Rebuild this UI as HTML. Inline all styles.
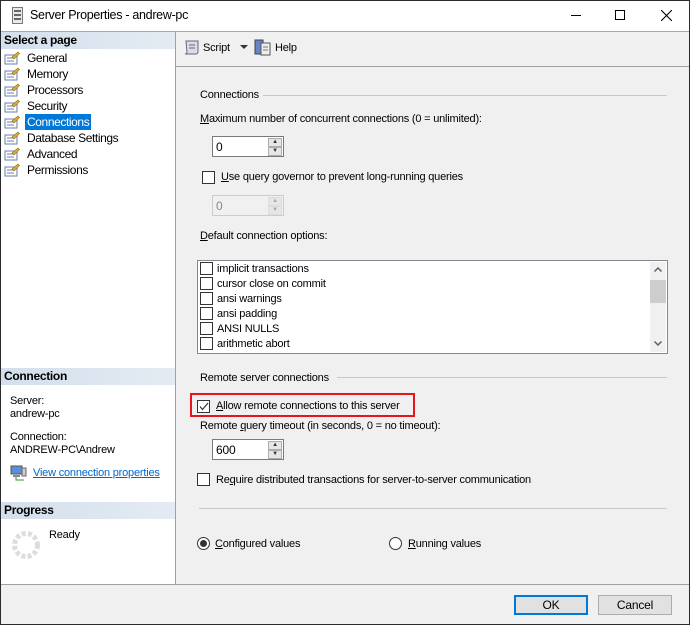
<!DOCTYPE html>
<html><head><meta charset="utf-8"><style>
*{margin:0;padding:0;box-sizing:border-box}
body{width:690px;height:625px;overflow:hidden;font:11px "Liberation Sans",sans-serif;letter-spacing:-0.2px;color:#000;background:#f0f0f0;position:relative}
.a{position:absolute;white-space:nowrap}
.t{line-height:14px}
u{text-decoration:underline}
.cb{position:absolute;width:13px;height:13px;border:1px solid #333;background:#fff}
.spin{position:absolute;width:72px;height:21px;border:1px solid #7a7a7a;background:#fff}
.spin span{position:absolute;left:3px;top:3px;font-size:12px}
.spin i{position:absolute;right:1px;width:14px;height:9px;background:#e6e6e6;border:1px solid #adadad;font-style:normal;font-size:6px;line-height:7px;text-align:center;color:#333}
.hdr{position:absolute;left:1px;width:174px;height:17px;background:linear-gradient(90deg,#d3dfec,#e4ebf3);font-weight:bold;padding:1px 0 0 3px;font-size:12px;letter-spacing:-0.3px}
.nav{position:absolute;left:4px;height:16px;width:170px;white-space:nowrap}
.nav b{position:absolute;left:0;top:1px;width:16px;height:14px}
.nav span{position:absolute;left:21px;top:0;padding:0 2px;line-height:16px;font-size:12px;letter-spacing:-0.4px}
.line{position:absolute;height:1px;background:#a0a0a0}
.btn{position:absolute;height:20px;background:#e1e1e1;border:1px solid #adadad;text-align:center;line-height:18px;font-size:12px}
</style></head><body>
<div class="a" style="left:0;top:0;width:690px;height:625px;border:1px solid #2b2b2b;z-index:10;pointer-events:none"></div>
<!-- title -->
<div class="a" style="left:0;top:0;width:690px;height:31px;background:#fff"></div>
<svg class="a" style="left:12px;top:7px" width="11" height="17"><rect x="0.5" y="0.5" width="10" height="16" fill="#e8e8e8" stroke="#777"/><rect x="2" y="3" width="7" height="2" fill="#666"/><rect x="2" y="7" width="7" height="2" fill="#666"/><rect x="2" y="11" width="7" height="2" fill="#666"/></svg>
<div class="a" style="left:30px;top:8px;font-size:12.5px;letter-spacing:-0.3px">Server Properties - andrew-pc</div>
<div class="a" style="left:571px;top:15px;width:10px;height:1px;background:#000"></div>
<div class="a" style="left:615px;top:10px;width:10px;height:10px;border:1px solid #000"></div>
<svg class="a" style="left:661px;top:10px" width="11" height="11"><path d="M0 0L11 11M11 0L0 11" stroke="#000" stroke-width="1.1"/></svg>
<div class="line" style="left:0;top:31px;width:690px;background:#aaa"></div>
<!-- left panel -->
<div class="a" style="left:1px;top:32px;width:174px;height:552px;background:#fff"></div>
<div class="a" style="left:175px;top:32px;width:1px;height:552px;background:#a0a0a0"></div>
<div class="hdr" style="top:32px">Select a page</div>
<div id="nav"></div>
<div class="hdr" style="top:368px">Connection</div>
<div class="a t" style="left:10px;top:394px">Server:</div>
<div class="a t" style="left:10px;top:407px">andrew-pc</div>
<div class="a t" style="left:10px;top:430px">Connection:</div>
<div class="a t" style="left:10px;top:443px">ANDREW-PC\Andrew</div>
<svg class="a" style="left:10px;top:465px" width="17" height="16"><rect x="1" y="1" width="11" height="8" fill="#5b8fd6" stroke="#555"/><rect x="3" y="10" width="7" height="2" fill="#888"/><rect x="12" y="3" width="4" height="8" fill="#ccc" stroke="#666"/><path d="M6 12v3h8" stroke="#2a9a2a" fill="none"/></svg>
<div class="a t" style="left:33px;top:466px;color:#0066cc;text-decoration:underline">View connection properties</div>
<div class="hdr" style="top:502px">Progress</div>
<svg class="a" style="left:10px;top:529px" width="32" height="32"><circle cx="16" cy="16" r="11.5" fill="none" stroke="#ddd" stroke-width="5" stroke-dasharray="4 2.2"/></svg>
<div class="a t" style="left:49px;top:528px">Ready</div>
<!-- toolbar -->
<svg class="a" style="left:183px;top:39px" width="18" height="17"><path d="M3 2h12v11a2 2 0 0 1-2 2H2a2 2 0 0 0 2-2z" fill="#d8dde6" stroke="#667"/><path d="M6 6h6M6 9h6" stroke="#667"/></svg>
<div class="a t" style="left:203px;top:41px">Script</div>
<svg class="a" style="left:240px;top:45px" width="8" height="5"><path d="M0 0h8L4 4z" fill="#333"/></svg>
<svg class="a" style="left:254px;top:39px" width="17" height="17"><rect x="1" y="1" width="8" height="14" fill="#6b84c4" stroke="#345"/><rect x="7" y="4" width="9" height="12" fill="#eee" stroke="#555"/><path d="M9 8h5M9 11h5" stroke="#777"/></svg>
<div class="a t" style="left:275px;top:41px">Help</div>
<div class="line" style="left:176px;top:66px;width:513px"></div>
<!-- content -->
<div class="a t" style="left:200px;top:88px">Connections</div>
<div class="line" style="left:263px;top:95px;width:404px;background:#c8c8c8"></div>
<div class="a t" style="left:200px;top:112px"><u>M</u>aximum number of concurrent connections (0 = unlimited):</div>
<div class="spin" style="left:212px;top:136px"><span>0</span><i style="top:1px">▲</i><i style="top:10px">▼</i></div>
<div class="cb" style="left:202px;top:171px"></div>
<div class="a t" style="left:221px;top:170px"><u>U</u>se query governor to prevent long-running queries</div>
<div class="spin" style="left:212px;top:195px;border-color:#ccc;background:#f0f0f0;color:#888"><span>0</span><i style="top:1px;color:#aaa;border-color:#ddd">▲</i><i style="top:10px;color:#aaa;border-color:#ddd">▼</i></div>
<div class="a t" style="left:200px;top:229px"><u>D</u>efault connection options:</div>
<div class="a" style="left:197px;top:260px;width:471px;height:94px;border:1px solid #828790;background:#fff">
 <div class="a" style="left:452px;top:1px;width:16px;height:90px;background:#f0f0f0"></div>
 <div class="a" style="left:452px;top:19px;width:16px;height:23px;background:#cdcdcd"></div>
 <svg class="a" style="left:456px;top:6px" width="8" height="5"><path d="M0.5 4.5L4 1 7.5 4.5" stroke="#606060" stroke-width="1.5" fill="none"/></svg>
 <svg class="a" style="left:456px;top:80px" width="8" height="5"><path d="M0.5 0.5L4 4 7.5 0.5" stroke="#606060" stroke-width="1.5" fill="none"/></svg>
</div>
<div id="opts"></div>
<div class="a t" style="left:200px;top:371px">Remote server connections</div>
<div class="line" style="left:337px;top:377px;width:330px;background:#c8c8c8"></div>
<div class="a" style="left:190px;top:393px;width:225px;height:24px;border:2px solid #e8141a"></div>
<div class="cb" style="left:197px;top:400px"></div>
<svg class="a" style="left:199px;top:402px" width="10" height="9"><path d="M1 4.5L3.5 7.5 9 1" stroke="#333" stroke-width="1.2" fill="none"/></svg>
<div class="a t" style="left:216px;top:399px"><u>A</u>llow remote connections to this server</div>
<div class="a t" style="left:200px;top:419px">Remote <u>q</u>uery timeout (in seconds, 0 = no timeout):</div>
<div class="spin" style="left:212px;top:439px"><span>600</span><i style="top:1px">▲</i><i style="top:10px">▼</i></div>
<div class="cb" style="left:197px;top:473px"></div>
<div class="a t" style="left:216px;top:473px">Re<u>q</u>uire distributed transactions for server-to-server communication</div>
<div class="line" style="left:199px;top:508px;width:468px;background:#c8c8c8"></div>
<div class="a" style="left:197px;top:537px;width:13px;height:13px;border:1px solid #333;border-radius:50%;background:#fff"></div>
<div class="a" style="left:200px;top:540px;width:7px;height:7px;border-radius:50%;background:#333"></div>
<div class="a t" style="left:215px;top:537px"><u>C</u>onfigured values</div>
<div class="a" style="left:389px;top:537px;width:13px;height:13px;border:1px solid #333;border-radius:50%;background:#fff"></div>
<div class="a t" style="left:408px;top:537px"><u>R</u>unning values</div>
<!-- bottom -->
<div class="line" style="left:1px;top:584px;width:688px"></div>
<div class="btn" style="left:514px;top:595px;width:74px;border:2px solid #0078d7;line-height:16px">OK</div>
<div class="btn" style="left:598px;top:595px;width:74px">Cancel</div>
<script>
var n=["General","Memory","Processors","Security","Connections","Database Settings","Advanced","Permissions"],h="";
n.forEach(function(s,i){var y=50+i*16,sel=i==4;
h+='<div class="nav" style="top:'+y+'px"><b><svg width="16" height="14"><rect x="1" y="4" width="12" height="9" fill="#fff" stroke="#6a7fa8"/><path d="M3 7h7M3 10h7" stroke="#6a7fa8"/><path d="M8 6L14 1l1.5 1.5L10 8z" fill="#e0b030" stroke="#8a6a10" stroke-width=".6"/></svg></b><span style="'+(sel?'background:#0078d7;color:#fff':'')+'">'+s+'</span></div>';});
document.getElementById("nav").innerHTML=h;
var o=["implicit transactions","cursor close on commit","ansi warnings","ansi padding","ANSI NULLS","arithmetic abort"];h="";
o.forEach(function(s,i){var y=262+i*15;h+='<div class="cb" style="left:200px;top:'+y+'px"></div><div class="a t" style="left:217px;top:'+(y)+'px">'+s+'</div>';});
document.getElementById("opts").innerHTML=h;
</script>
</body></html>
